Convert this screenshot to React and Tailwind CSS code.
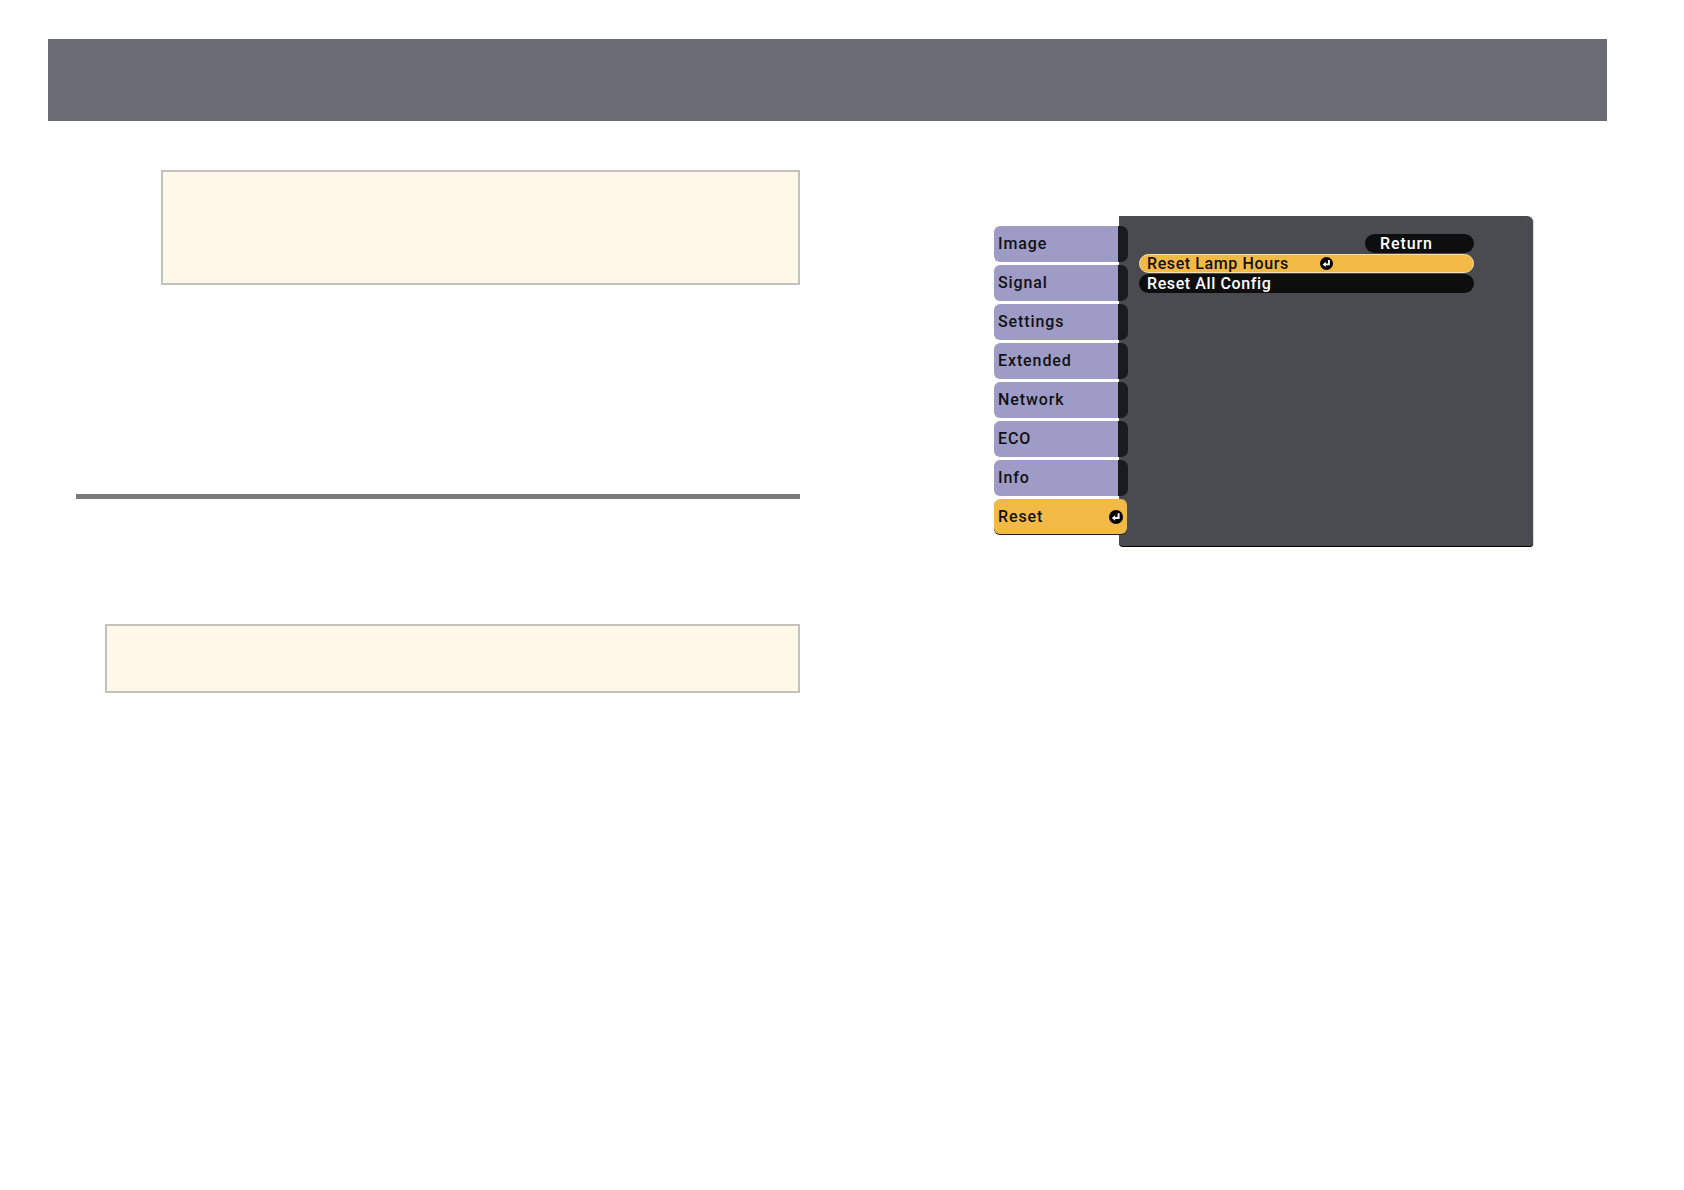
const tabs = ["Image", "Signal", "Settings", "Extended", "Network", "ECO", "Info"];

const osd = { fontFamily: "Roboto, 'Liberation Sans', sans-serif" };

const EnterIcon = ({ size = 13 }) => (
  <svg width={size} height={size} viewBox="0 0 14 14">
    <circle cx="7" cy="7" r="7" fill="#000" />
    <path d="M9.6 3.2 V8 H5.4" stroke="#fff" strokeWidth="2" fill="none" />
    <polygon points="2.8,8 6.2,5.2 6.2,10.8" fill="#fff" />
  </svg>
);

const MenuTabs = () => (
  <div className="relative z-10 mt-[10px] flex w-[134px] flex-col gap-[3px]">
    {tabs.map((t) => (
      <div key={t} className="flex h-[36px]">
        <div className="flex w-[124px] items-center rounded-l-[6px] bg-[#9f9bc7] pl-[4px] text-[16px] font-medium tracking-[0.9px] text-[#111]">
          {t}
        </div>
        <div className="w-[10px] rounded-r-[7px] bg-[#1b1b1d]" />
      </div>
    ))}
    <div className="flex h-[35px] w-[133px] items-center justify-between rounded-[6px] bg-[#f3b945] pl-[4px] pr-[4px] text-[16px] font-medium tracking-[0.9px] text-[#111] shadow-[0_1px_0_#222]">
      <span>Reset</span>
      <EnterIcon size={14} />
    </div>
  </div>
);

const MenuPanel = () => (
  <div className="-ml-[9px] h-[330px] w-[414px] rounded-tr-[6px] rounded-br-[3px] rounded-bl-[4px] bg-[#4a4a51] pl-[20px] pt-[18px] shadow-[0_1px_0_#000,1px_0_0_#d8d8d8]">
    <div className="flex w-[335px] flex-col gap-[1px] text-[16px] font-medium tracking-[0.6px]">
      <div className="flex h-[19px] w-[109px] items-center self-end rounded-full bg-[#0e0e0e] pl-[15px] tracking-[0.9px] text-white">
        Return
      </div>
      <div className="flex h-[19px] items-center rounded-full border border-[#f8dea3] bg-[#f3b945] pl-[7px] text-[#111]">
        <span className="w-[173px]">Reset Lamp Hours</span>
        <EnterIcon />
      </div>
      <div className="flex h-[19px] items-center rounded-full bg-[#0e0e0e] pl-[8px] text-white">
        Reset All Config
      </div>
    </div>
  </div>
);

const App = () => {
  return (
    <div className="h-[1190px] w-[1684px] bg-white" style={osd}>
      <div className="ml-[48px] h-[121px] pt-[39px]">
        <div className="h-[82px] w-[1559px] bg-[#6b6d75]" />
      </div>

      <div className="flex">
        <div className="w-[804px]">
          <div className="ml-[161px] mt-[49px] h-[115px] w-[639px] border-2 border-[#c3c1bc] bg-[#fdf8e7]" />
          <div className="ml-[76px] mt-[209px] h-[5px] w-[724px] bg-[#7a7a7a]" />
          <div className="ml-[105px] mt-[125px] h-[69px] w-[695px] border-2 border-[#c3c1bc] bg-[#fdf8e7]" />
        </div>

        <div className="ml-[190px] mt-[95px] flex items-start">
          <MenuTabs />
          <MenuPanel />
        </div>
      </div>
    </div>
  );
};

export default App;
